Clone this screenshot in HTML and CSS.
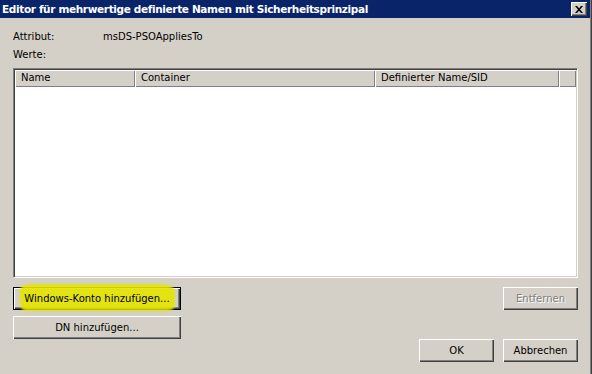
FILE: index.html
```html
<!DOCTYPE html>
<html lang="de">
<head>
  <meta charset="UTF-8">
  <title>Editor für mehrwertige definierte Namen mit Sicherheitsprinzipal</title>
  <link rel="stylesheet" href="styles.css">
</head>
<body>
  <div class="window">
    <div class="titlebar">
      <span class="title">Editor für mehrwertige definierte Namen mit Sicherheitsprinzipal</span>
      <span class="close-btn">
        <svg width="8" height="7" viewBox="0 0 8 7">
          <path d="M0 0h2l2 2.2L6 0h2L5 3.5L8 7H6L4 4.8L2 7H0l3-3.5z" fill="#000"/>
        </svg>
      </span>
    </div>
    <div class="content">
      <div class="field">
        <span class="label">Attribut:</span>
        <span class="value">msDS-PSOAppliesTo</span>
      </div>
      <div class="field">
        <span class="label">Werte:</span>
      </div>
      <div class="listbox">
        <div class="list-header">
          <div class="col col-name">Name</div>
          <div class="col col-container">Container</div>
          <div class="col col-dn">Definierter Name/SID</div>
          <div class="col col-rest"></div>
        </div>
      </div>
      <div class="lower">
        <div class="stack">
          <button class="btn btn-wide btn-default">
            <span class="marker"></span>
            <span class="btn-text">Windows-Konto hinzufügen...</span>
          </button>
          <button class="btn btn-wide">DN hinzufügen...</button>
        </div>
        <div class="stack stack-right">
          <button class="btn" disabled>Entfernen</button>
          <div class="footer">
            <button class="btn">OK</button>
            <button class="btn">Abbrechen</button>
          </div>
        </div>
      </div>
    </div>
  </div>
</body>
</html>
```

FILE: styles.css
```css
body {
  margin: 0;
  padding: 0;
  font-family: "DejaVu Sans", Verdana, sans-serif;
  font-size: 10px;
  color: #000;
  background: #d4d0c8;
}
.window {
  position: relative;
  width: 592px;
  height: 374px;
  background: #d4d0c8;
  box-shadow: inset -1px 0 #404040, inset -2px 0 #808080;
  overflow: hidden;
}
.titlebar {
  height: 18px;
  background: #0a246a;
  display: flex;
  align-items: center;
  justify-content: space-between;
  padding: 0 3px 0 2px;
  margin-right: 2px;
}
.title {
  color: #fff;
  font-weight: bold;
  font-size: 10.5px;
  letter-spacing: -0.35px;
}
.close-btn {
  width: 16px;
  height: 14px;
  box-sizing: border-box;
  background: #d4d0c8;
  display: flex;
  align-items: center;
  justify-content: center;
  box-shadow: inset 1px 1px #fff, inset -1px -1px #404040, inset -2px -2px #808080;
}
.content {
  padding: 9px 14px 0 13px;
}
.field {
  display: flex;
  height: 18px;
  align-items: center;
}
.label {
  width: 90px;
}
.listbox {
  margin-top: 5px;
  height: 210px;
  box-sizing: border-box;
  background: #fff;
  border: 1px solid;
  border-color: #808080 #fff #fff #808080;
  box-shadow: inset 1px 1px #404040, inset -1px -1px #d4d0c8;
  padding: 1px;
}
.list-header {
  display: flex;
  height: 17px;
}
.col {
  box-sizing: border-box;
  background: #d4d0c8;
  padding: 0 6px;
  line-height: 16px;
  white-space: nowrap;
  box-shadow: inset 1px 1px #fff, inset -1px -1px #808080;
}
.col-name { width: 120px; }
.col-container { width: 240px; }
.col-dn { width: 184px; }
.col-rest { flex: 1; }
.lower {
  display: flex;
  justify-content: space-between;
  margin-top: 9px;
}
.stack {
  display: flex;
  flex-direction: column;
  gap: 6px;
}
.stack-right {
  align-items: flex-end;
  gap: 29px;
}
.footer {
  display: flex;
  gap: 9px;
}
.btn {
  position: relative;
  width: 75px;
  height: 23px;
  padding: 0;
  border: none;
  background: #d4d0c8;
  font-family: inherit;
  font-size: 10px;
  color: #000;
  box-shadow: inset 1px 1px #fff, inset -1px -1px #404040, inset -2px -2px #808080;
}
.btn-wide {
  width: 168px;
}
.btn-default {
  box-shadow: inset 0 0 0 1px #000, inset 2px 2px #fff, inset -2px -2px #404040, inset -3px -3px #808080;
}
.btn-text {
  position: relative;
}
.btn:disabled {
  color: #808080;
  text-shadow: 1px 1px #fff;
}
.marker {
  position: absolute;
  left: 7px;
  right: 6px;
  top: -3px;
  bottom: -1px;
  background: rgba(228, 228, 0, 0.9);
  border-radius: 10px 14px 8px 6px / 6px 8px 6px 8px;
  filter: blur(0.8px);
}
```
